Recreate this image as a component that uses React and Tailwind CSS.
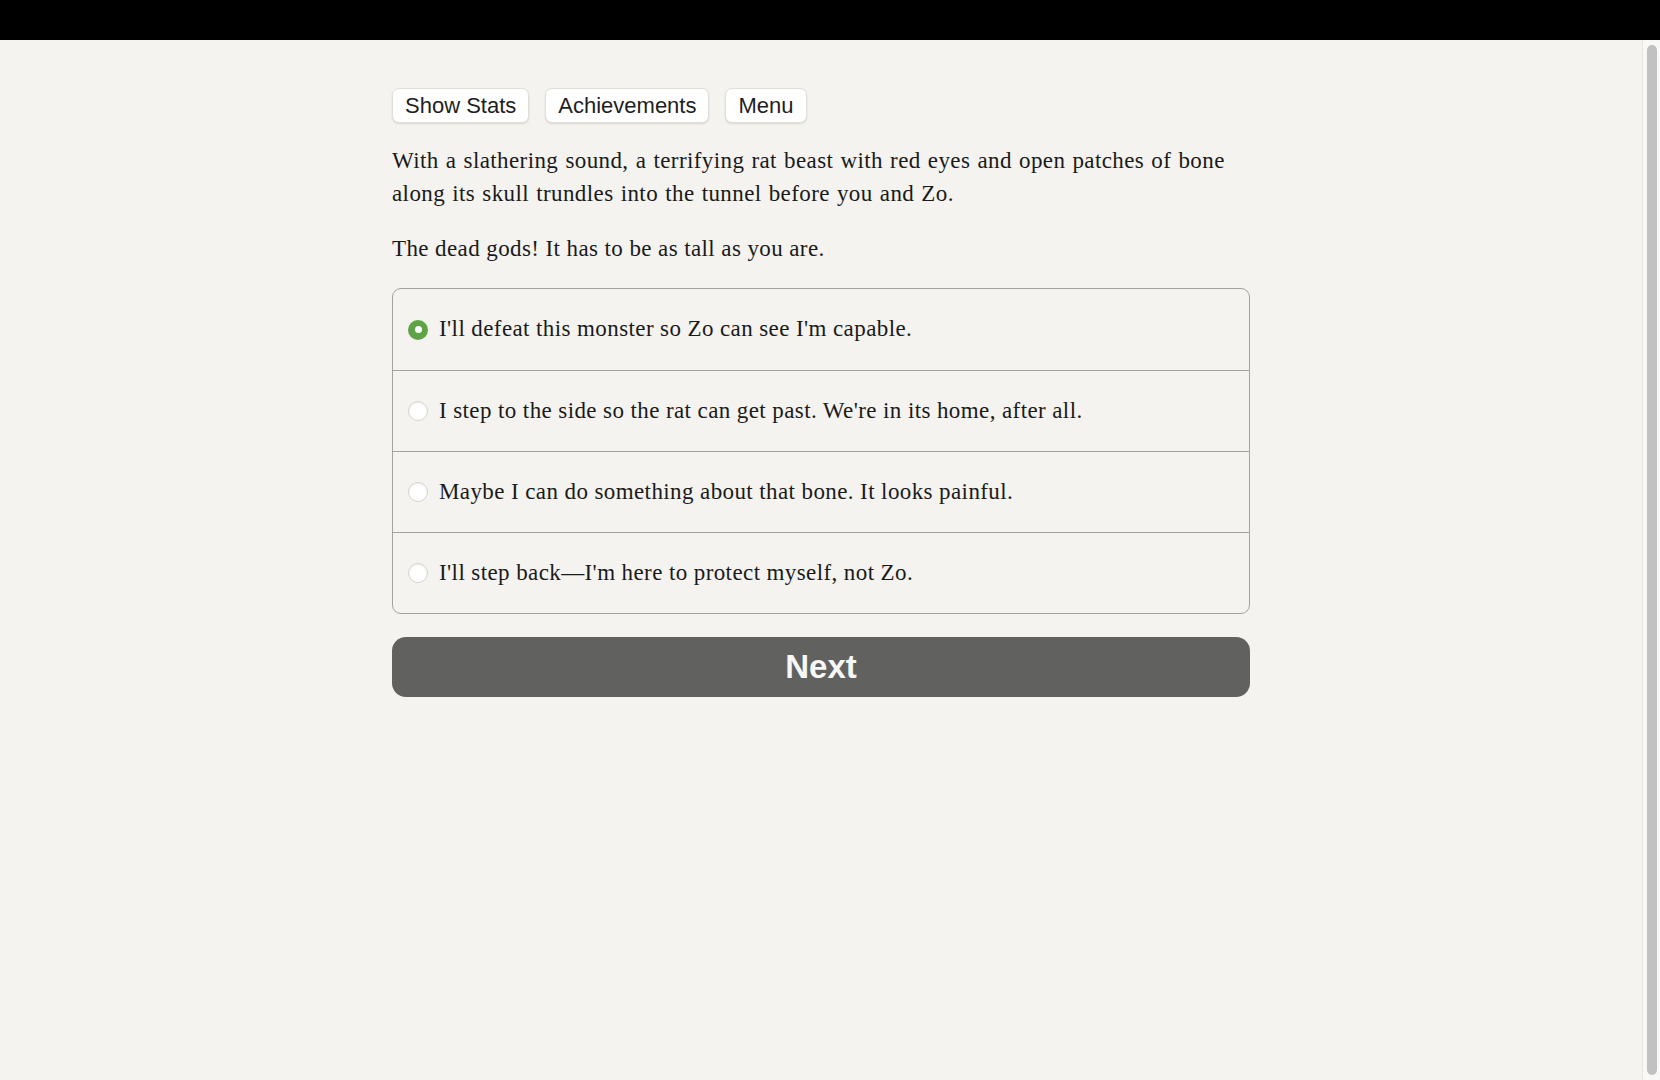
import React, { useState } from "react";

const serif = { fontFamily: '"Liberation Serif", "Times New Roman", serif' };

const choices = [
  "I'll defeat this monster so Zo can see I'm capable.",
  "I step to the side so the rat can get past. We're in its home, after all.",
  "Maybe I can do something about that bone. It looks painful.",
  "I'll step back\u2014I'm here to protect myself, not Zo.",
];

function TopButton({ children }) {
  return (
    <button className="h-[35px] rounded-[7px] border border-[#e0deda] bg-white px-[12px] text-[22px] leading-none text-[#1e1e1e] shadow-[0_1px_2px_rgba(0,0,0,0.12)] font-['Liberation_Sans',Arial,sans-serif]">
      {children}
    </button>
  );
}

function Radio({ checked }) {
  if (checked) {
    return (
      <span className="flex h-[20px] w-[20px] shrink-0 items-center justify-center rounded-full bg-[#5fa347]">
        <span className="h-[7px] w-[7px] rounded-full bg-white" />
      </span>
    );
  }
  return (
    <span className="h-[20px] w-[20px] shrink-0 rounded-full border border-[#d6d4d0] bg-white shadow-[inset_0_1px_2px_rgba(0,0,0,0.08)]" />
  );
}

export default function App() {
  const [selected, setSelected] = useState(0);

  return (
    <div className="flex h-[1080px] flex-col overflow-hidden bg-[#f4f3ef]">
      <div className="h-[40px] shrink-0 bg-black" />
      <div className="flex min-h-0 flex-1">
        <main className="flex-1">
          <div className="mx-auto w-[858px] pt-[48px]">
            <div className="flex gap-[16px]">
              <TopButton>Show Stats</TopButton>
              <TopButton>Achievements</TopButton>
              <TopButton>Menu</TopButton>
            </div>

            <div style={serif} className="mt-[21px] text-[23px] leading-[33px] tracking-[0.4px] text-[#1a1a1a]">
              <p className="[word-spacing:1px]">
                With a slathering sound, a terrifying rat beast with red eyes and open patches of bone
                along its skull trundles into the tunnel before you and Zo.
              </p>
              <p className="mt-[22px]">The dead gods! It has to be as tall as you are.</p>
            </div>

            <div className="mt-[23px] overflow-hidden rounded-[9px] border border-[#a3a2a0]">
              {choices.map((text, i) => (
                <label
                  key={i}
                  onClick={() => setSelected(i)}
                  className={
                    "flex h-[81px] cursor-pointer items-center gap-[11px] pl-[15px] " +
                    (i > 0 ? "border-t border-[#a3a2a0]" : "")
                  }
                >
                  <Radio checked={selected === i} />
                  <span style={serif} className="text-[23px] tracking-[0.4px] text-[#1a1a1a]">
                    {text}
                  </span>
                </label>
              ))}
            </div>

            <button className="mt-[23px] flex h-[60px] w-full items-center justify-center rounded-[14px] bg-[#616160] text-[33px] font-bold text-[#f7f7f5] font-['Liberation_Sans',Arial,sans-serif]">
              Next
            </button>
          </div>
        </main>

        <div className="flex w-[18px] shrink-0 justify-center border-l border-[#e6e5e2] bg-[#f8f8f7] py-[5px]">
          <div className="w-[10px] rounded-full bg-[#c1c1c1]" />
        </div>
      </div>
    </div>
  );
}
